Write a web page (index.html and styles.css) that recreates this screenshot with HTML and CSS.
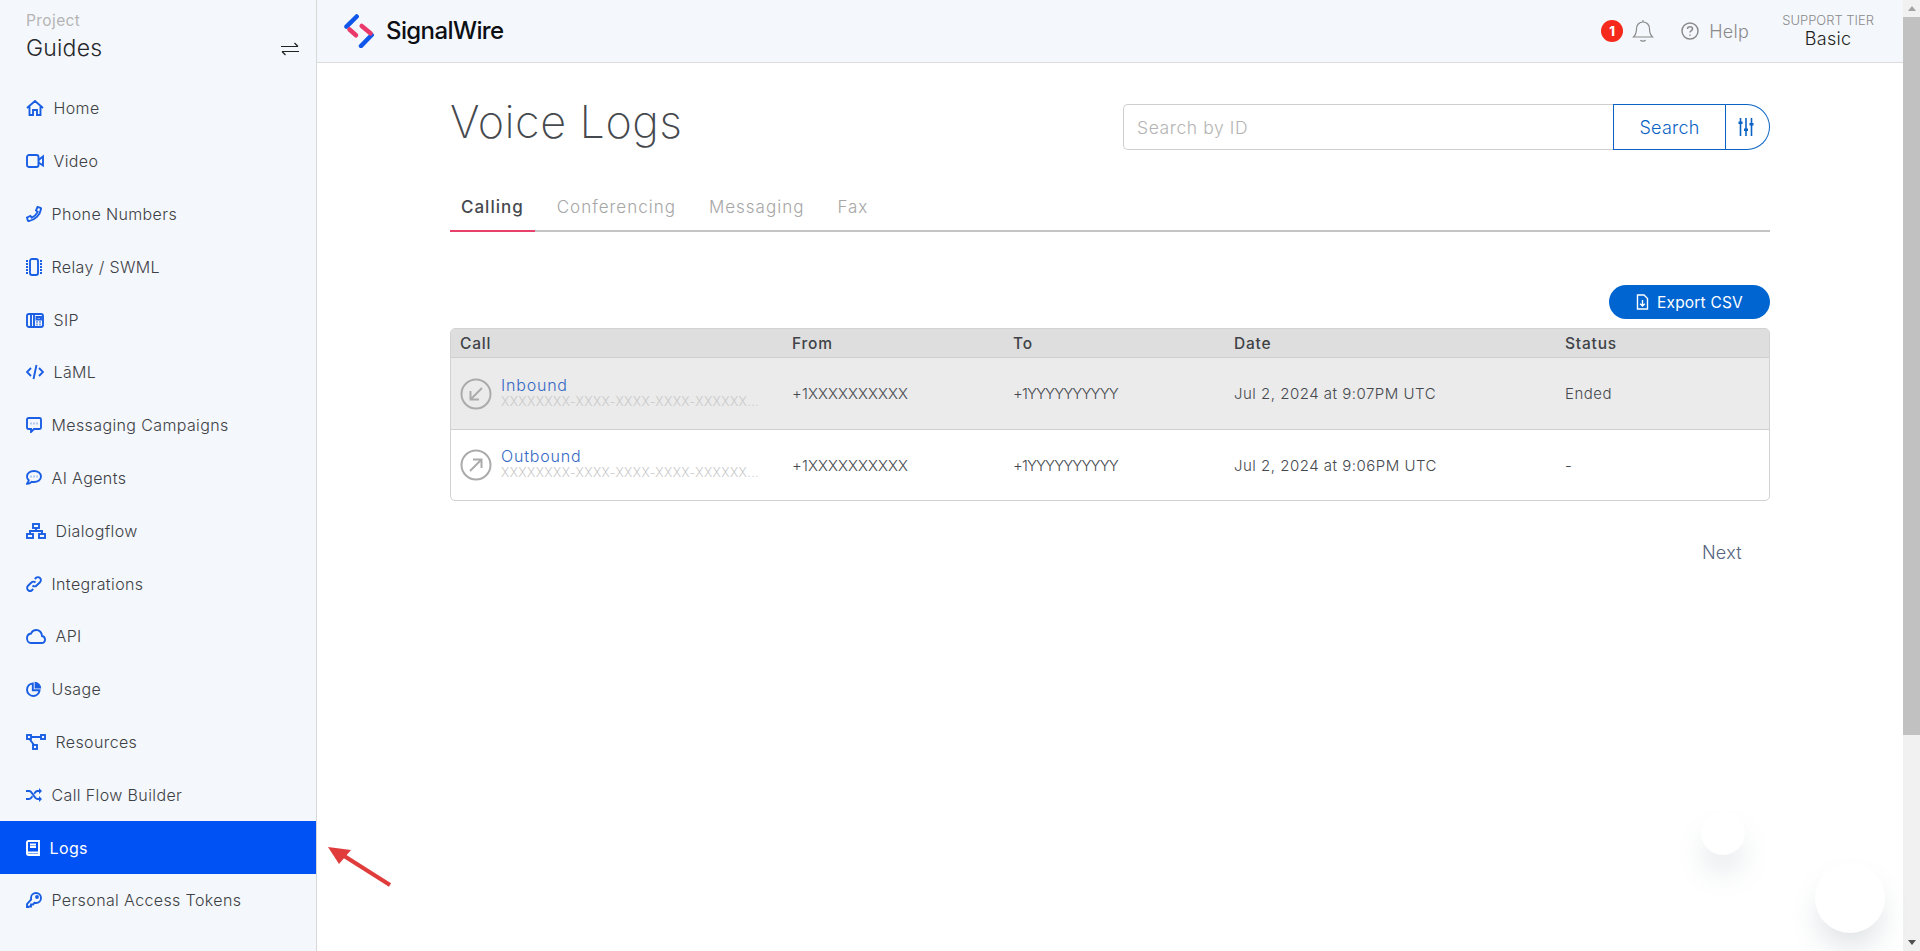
FILE: index.html
```html
<!DOCTYPE html>
<html lang="en">
<head>
    <meta charset="UTF-8">
    <meta name="viewport" content="width=device-width, initial-scale=1.0">
    <title>Voice Logs</title>
    <link rel="stylesheet" href="styles.css">
</head>
<body>
<div class="app">
    <aside class="sidebar">
        <div class="project">
            <div class="project-label">Project</div>
            <div class="project-row">
                <span class="project-name">Guides</span>
                <svg class="swap" width="18" height="14" viewBox="0 0 18 14"><path d="M0 4.5H17M13.5 1L17 4.5M18 9.5H1M4.5 13L1 9.5"/></svg>
            </div>
        </div>
        <nav class="nav">
            <a class="nav-item"><svg width="18" height="16" viewBox="0 0 18 16"><path d="M1 8L9 1L17 8M3.5 6V15H7V10H11V15H14.5V6"/></svg>Home</a>
            <a class="nav-item"><svg width="18" height="14" viewBox="0 0 18 14"><rect x="1" y="1" width="11.5" height="12" rx="2"/><path d="M12.5 6L17 2.5V11.5L12.5 8.5"/></svg>Video</a>
            <a class="nav-item"><svg width="16" height="16" viewBox="0 0 16 16"><path d="M11.5 1L14.6 1.8C15 1.9 15.1 2.2 15.1 2.6C14.2 9 9 14.2 2.6 15.1C2.2 15.1 1.9 15 1.8 14.6L1 11.5L4.4 10L5.8 11.7C8 10.6 10.6 8 11.7 5.8L10 4.4Z"/></svg>Phone Numbers</a>
            <a class="nav-item"><svg width="16" height="18" viewBox="0 0 16 18"><rect x="4" y="1" width="8" height="16" rx="2"/><path d="M0 3H2M0 6H2M0 9H2M0 12H2M0 15H2M14 3H16M14 6H16M14 9H16M14 12H16M14 15H16"/></svg>Relay / SWML</a>
            <a class="nav-item"><svg width="18" height="16" viewBox="0 0 18 16"><rect x="1" y="2" width="16" height="13" rx="2"/><path d="M5 1V15M8 1V15M10.5 5H15V7.5H10.5ZM10.5 10H11.5M13.5 10H14.5M10.5 12.5H11.5M13.5 12.5H14.5"/></svg>SIP</a>
            <a class="nav-item"><svg width="18" height="16" viewBox="0 0 18 16"><path d="M5 4L1 8L5 12M13 4L17 8L13 12M10.5 1L7.5 15"/></svg>LāML</a>
            <a class="nav-item"><svg width="16" height="16" viewBox="0 0 16 16"><path d="M2.5 1H13.5C14.3 1 15 1.7 15 2.5V10.5C15 11.3 14.3 12 13.5 12H8L5 15V12H2.5C1.7 12 1 11.3 1 10.5V2.5C1 1.7 1.7 1 2.5 1Z"/><path class="dots" d="M4.7 6.5H5.3M7.7 6.5H8.3M10.7 6.5H11.3"/></svg>Messaging Campaigns</a>
            <a class="nav-item"><svg width="16" height="15" viewBox="0 0 16 15"><path d="M8 1C4.1 1 1 3.3 1 6.5C1 8 1.7 9.3 2.8 10.3C2.5 11.6 1.8 12.8 1 13.7C2.8 13.7 4.5 13 5.6 11.8C6.3 12 7.2 12 8 12C11.9 12 15 9.7 15 6.5C15 3.3 11.9 1 8 1Z"/><path class="dots" d="M4.7 6.5H5.3M7.7 6.5H8.3M10.7 6.5H11.3"/></svg>AI Agents</a>
            <a class="nav-item"><svg width="20" height="16" viewBox="0 0 20 16"><rect x="7" y="1" width="6" height="4"/><rect x="1" y="11" width="6" height="4"/><rect x="13" y="11" width="6" height="4"/><path d="M10 5V8M4 11V8H16V11"/></svg>Dialogflow</a>
            <a class="nav-item"><svg width="16" height="16" viewBox="0 0 16 16"><path d="M6.5 9.5C7.7 10.7 9.5 10.7 10.6 9.5L14 6.2C15.2 5 15.2 3.1 14 2C12.8 0.8 11 0.8 9.8 2L8.8 3"/><path d="M9.5 6.5C8.3 5.3 6.5 5.3 5.4 6.5L2 9.8C0.8 11 0.8 12.9 2 14C3.2 15.2 5 15.2 6.2 14L7.2 13"/></svg>Integrations</a>
            <a class="nav-item"><svg width="20" height="15" viewBox="0 0 20 15"><path d="M5 14H15.5C17.5 14 19 12.5 19 10.5C19 8.7 17.7 7.3 16 7C16 3.7 13.5 1 10.3 1C8 1 6 2.4 5.1 4.5C2.7 4.8 1 6.8 1 9.2C1 11.9 2.6 14 5 14Z"/></svg>API</a>
            <a class="nav-item"><svg width="16" height="16" viewBox="0 0 16 16"><path d="M6.8 2.4A6.3 6.3 0 1 0 13.6 9.2H6.8Z"/><path class="fill" d="M8.6 0.8A6.6 6.6 0 0 1 15.2 7.4H8.6Z"/></svg>Usage</a>
            <a class="nav-item"><svg width="20" height="16" viewBox="0 0 20 16"><rect x="1" y="1" width="4" height="4"/><rect x="15" y="1" width="4" height="4"/><rect x="7" y="11" width="4" height="4"/><path d="M5 3H15M3.5 5L8 11"/></svg>Resources</a>
            <a class="nav-item"><svg width="16" height="14" viewBox="0 0 16 14"><path d="M0 3H3C4 3 4.6 3.4 5.2 4.1L9.4 9.9C10 10.6 10.6 11 11.6 11H14M0 11H3C4 11 4.6 10.6 5.2 9.9L6.4 8.3M8.2 5.7L9.4 4.1C10 3.4 10.6 3 11.6 3H14"/><path class="fill" d="M13 0L16 3L13 6ZM13 8L16 11L13 14Z"/></svg>Call Flow Builder</a>
            <a class="nav-item active"><svg width="14" height="16" viewBox="0 0 14 16"><path d="M2.5 1H13V15H2.5C1.7 15 1 14.3 1 13.5V2.5C1 1.7 1.7 1 2.5 1ZM1 12.5H13M4 4.5H10M4 7H10"/></svg>Logs</a>
            <a class="nav-item"><svg width="16" height="16" viewBox="0 0 16 16"><path d="M10 1C12.8 1 15 3.2 15 6C15 8.8 12.8 11 10 11C9.5 11 9 10.9 8.5 10.8L7 12.5H5V14.5H3L2.5 15H1V12L5.2 7.5C5.1 7 5 6.5 5 6C5 3.2 7.2 1 10 1Z"/><circle cx="11" cy="5" r="1"/></svg>Personal Access Tokens</a>
        </nav>
    </aside>

    <div class="page">
        <header class="topbar">
            <div class="brand">
                <svg width="31" height="34" viewBox="0 0 31 34"><path class="logo-blue" d="M12.7 2.5L2.5 12.7M27.7 21L17 32"/><path class="logo-pink" d="M5.5 15.5L12 21.3M17.7 12L26.5 19.3"/></svg>
                <span class="brand-name">SignalWire</span>
            </div>
            <div class="topbar-right">
                <span class="badge">1</span>
                <svg class="bell" width="22" height="24" viewBox="0 0 22 24"><path d="M11 1V3M11 3C7 3 4.5 6 4.5 10C4.5 14.5 3.5 16 1.5 18H20.5C18.5 16 17.5 14.5 17.5 10C17.5 6 15 3 11 3ZM8.5 21C9 22.5 13 22.5 13.5 21"/></svg>
                <a class="help"><svg width="18" height="18" viewBox="0 0 18 18"><circle cx="9" cy="9" r="8"/><path d="M6.5 7C6.5 5.5 7.7 4.8 9 4.8C10.5 4.8 11.5 5.7 11.5 6.9C11.5 8.5 9 8.7 9 10.5M9 12.5V13.8"/></svg>Help</a>
                <div class="tier">
                    <div class="tier-label">SUPPORT TIER</div>
                    <div class="tier-name">Basic</div>
                </div>
            </div>
        </header>

        <main class="content">
            <div class="title-row">
                <h1>Voice Logs</h1>
                <form class="search">
                    <input type="text" placeholder="Search by ID">
                    <button type="button" class="search-btn">Search</button>
                    <button type="button" class="filter-btn"><svg width="16" height="18" viewBox="0 0 16 18"><path d="M2.5 0V18M8 0V18M13.5 0V18"/><path class="fill" d="M0.5 3.5H4.5V6H0.5ZM6 10.5H10V13H6ZM11.5 5H15.5V7.5H11.5Z"/></svg></button>
                </form>
            </div>

            <div class="tabs">
                <a class="tab active">Calling</a>
                <a class="tab">Conferencing</a>
                <a class="tab">Messaging</a>
                <a class="tab">Fax</a>
            </div>

            <div class="actions">
                <button type="button" class="export-btn"><svg width="13" height="16" viewBox="0 0 13 16"><path d="M1.5 1H8L11.5 4.5V15H1.5ZM6.5 6V12M4.2 9.7L6.5 12L8.8 9.7"/></svg>Export CSV</button>
            </div>

            <div class="table">
                <div class="row head">
                    <div>Call</div><div>From</div><div>To</div><div>Date</div><div>Status</div>
                </div>
                <div class="row body hovered">
                    <div class="call">
                        <svg width="32" height="32" viewBox="0 0 32 32"><circle cx="16" cy="16" r="14.5"/><path d="M22 10L10.5 21.5M10.5 13V21.5H19"/></svg>
                        <div class="call-text">
                            <a class="call-type">Inbound</a>
                            <div class="call-id">XXXXXXXX-XXXX-XXXX-XXXX-XXXXXX...</div>
                        </div>
                    </div>
                    <div class="phone">+1XXXXXXXXXX</div><div class="phone-to">+1YYYYYYYYYY</div><div>Jul 2, 2024 at 9:07PM UTC</div><div>Ended</div>
                </div>
                <div class="row body">
                    <div class="call">
                        <svg width="32" height="32" viewBox="0 0 32 32"><circle cx="16" cy="16" r="14.5"/><path d="M10 22L21.5 10.5M13 10.5H21.5V19"/></svg>
                        <div class="call-text">
                            <a class="call-type">Outbound</a>
                            <div class="call-id">XXXXXXXX-XXXX-XXXX-XXXX-XXXXXX...</div>
                        </div>
                    </div>
                    <div class="phone">+1XXXXXXXXXX</div><div class="phone-to">+1YYYYYYYYYY</div><div>Jul 2, 2024 at 9:06PM UTC</div><div>-</div>
                </div>
            </div>

            <div class="pager"><a class="next">Next</a></div>
        </main>
    </div>

    <div class="scrollbar">
        <span class="arrow up"></span>
        <div class="track"><div class="thumb"></div></div>
        <span class="arrow down"></span>
    </div>
</div>

<!-- annotation arrow and the two floating widgets -->
<svg class="annotation" width="66" height="42" viewBox="0 0 66 42"><path class="arrow-shaft" d="M63 39L14 8"/><path class="arrow-head" d="M1 1L24 4L12 18Z"/></svg>
<div class="float float-small"></div>
<div class="float float-large"></div>
</body>
</html>
```

FILE: styles.css
```css
* {
    box-sizing: border-box;
}
html, body {
    height: 100%;
    margin: 0;
    overflow: hidden;
}
body {
    font-family: Inter, "Open Sans", sans-serif;
    color: #45494e;
    background-color: white;
}
a {
    cursor: pointer;
}
button, input {
    font-family: inherit;
}
.app {
    display: flex;
    height: 951px;
}

/* sidebar */
.sidebar {
    width: 317px;
    flex-shrink: 0;
    background-color: #f4f7fb;
    border-right: 1px solid #d8d8d8;
}
.project {
    height: 82px;
    padding: 12px 17px 0 26px;
}
.project-label {
    font-size: 15.5px;
    letter-spacing: 0.4px;
    line-height: 18px;
    color: #b5b5b5;
}
.project-row {
    display: flex;
    justify-content: space-between;
    align-items: center;
    margin-top: 3px;
}
.project-name {
    font-size: 23px;
    font-weight: 300;
    letter-spacing: 0.2px;
    line-height: 30px;
    color: #26282b;
}
.swap {
    fill: none;
    stroke: #222;
    stroke-width: 1.2;
    margin-top: 2px;
}
.nav-item {
    display: flex;
    align-items: center;
    gap: 9.5px;
    height: 52.8px;
    padding-left: 26px;
    font-size: 16px;
    font-weight: 300;
    letter-spacing: 0.38px;
    color: #3d4145;
}
.nav-item svg {
    flex-shrink: 0;
    fill: none;
    stroke: #1a5fe3;
    stroke-width: 1.9;
}
.nav-item svg .fill {
    fill: #1a5fe3;
    stroke: none;
}
.nav-item svg .dots {
    stroke-width: 2.2;
}
.nav-item.active {
    background-color: #0052f5;
    color: white;
    font-weight: 400;
}
.nav-item.active svg {
    stroke: white;
}

/* top bar */
.page {
    flex: 1;
    display: flex;
    flex-direction: column;
    min-width: 0;
}
.topbar {
    display: flex;
    justify-content: space-between;
    align-items: center;
    height: 63px;
    flex-shrink: 0;
    padding: 0 30px 0 27px;
    background-color: #f4f7fb;
    border-bottom: 1px solid #dcdcdc;
}
.brand {
    display: flex;
    align-items: center;
    gap: 11px;
}
.brand svg {
    fill: none;
    stroke-linecap: round;
    stroke-width: 4.5;
}
.logo-blue {
    stroke: #0f56ea;
}
.logo-pink {
    stroke: #ea3a6b;
}
.brand-name {
    margin-top: -2px;
    font-size: 24px;
    font-weight: 500;
    letter-spacing: -0.6px;
    color: #0c0f14;
}
.topbar-right {
    display: flex;
    align-items: center;
}
.badge {
    display: flex;
    justify-content: center;
    align-items: center;
    width: 22px;
    height: 22px;
    border-radius: 50%;
    background-color: #f5291c;
    color: white;
    font-size: 13px;
    font-weight: 800;
}
.bell {
    margin-left: 9px;
    fill: none;
    stroke: #8a8a8a;
    stroke-width: 1.2;
}
.help {
    display: flex;
    align-items: center;
    gap: 10px;
    margin-left: 27px;
    font-size: 18px;
    font-weight: 300;
    letter-spacing: 0.3px;
    color: #8b8b8b;
}
.help svg {
    fill: none;
    stroke: #8b8b8b;
    stroke-width: 1.5;
}
.tier {
    margin-left: 33px;
    margin-right: -1px;
    text-align: center;
}
.tier-label {
    font-size: 13px;
    font-weight: 300;
    line-height: 15px;
    color: #8b8b8b;
}
.tier-name {
    font-size: 18px;
    font-weight: 300;
    letter-spacing: 0.3px;
    line-height: 22px;
    color: #1d1f22;
}

/* main content */
.content {
    width: 1320px;
    margin: 0 auto;
}
.title-row {
    display: flex;
    justify-content: space-between;
    align-items: flex-start;
    padding-top: 32px;
}
h1 {
    margin: 0;
    font-size: 45px;
    font-weight: 200;
    letter-spacing: 0.45px;
    line-height: 54px;
    color: #45494e;
}
.search {
    display: flex;
    width: 647px;
    height: 46px;
    margin-top: 9px;
}
.search input {
    flex: 1;
    min-width: 0;
    padding: 0 13px;
    border: 1px solid #cfcfcf;
    border-right: none;
    border-radius: 5px 0 0 5px;
    font-size: 17.5px;
    font-weight: 300;
    letter-spacing: 0.6px;
    outline: none;
}
.search input::placeholder {
    color: #b4b4b4;
}
.search-btn, .filter-btn {
    border: 1px solid #0a63c4;
    background-color: white;
    color: #0a63c4;
}
.search-btn {
    width: 113px;
    font-size: 18px;
    font-weight: 300;
    letter-spacing: 0.2px;
}
.filter-btn {
    display: flex;
    justify-content: center;
    align-items: center;
    width: 44px;
    padding: 0 3px 0 0;
    border-left: none;
    border-radius: 0 23px 23px 0;
}
.filter-btn svg {
    fill: none;
    stroke: #0a63c4;
    stroke-width: 1.6;
}
.filter-btn svg .fill {
    fill: #0a63c4;
    stroke: none;
}
.tabs {
    display: flex;
    margin-top: 36px;
    height: 46px;
    border-bottom: 2px solid #c4c4c4;
}
.tab {
    height: 46px;
    padding: 0 11px;
    margin-right: 11px;
    font-size: 17px;
    font-weight: 300;
    letter-spacing: 1px;
    line-height: 42px;
    color: #a6a6a6;
}
.tab.active {
    border-bottom: 2px solid #e8406b;
    font-weight: 500;
    color: #45494e;
}
.actions {
    display: flex;
    justify-content: flex-end;
    margin-top: 53px;
}
.export-btn {
    display: flex;
    justify-content: center;
    align-items: center;
    gap: 8px;
    width: 161px;
    height: 34px;
    border: none;
    border-radius: 17px;
    background-color: #0065d1;
    color: white;
    font-size: 15.5px;
    font-weight: 400;
    letter-spacing: 0.2px;
}
.export-btn svg {
    fill: none;
    stroke: white;
    stroke-width: 1.4;
}

/* table */
.table {
    margin-top: 9px;
    border: 1px solid #d2d2d2;
    border-radius: 5px;
    overflow: hidden;
}
.row {
    display: grid;
    grid-template-columns: 332px 221px 221px 331px 1fr;
    align-items: center;
    padding-left: 9px;
    font-size: 15px;
    font-weight: 300;
    letter-spacing: 0.5px;
}
.row.head {
    height: 29px;
    background-color: #dedede;
    border-bottom: 1px solid #cfcfcf;
    font-size: 15.5px;
    font-weight: 500;
    letter-spacing: 0.8px;
    color: #3f4246;
}
.row.body {
    height: 71px;
}
.row.body + .row.body {
    border-top: 1px solid #cfcfcf;
}
.row.hovered {
    background-color: #ebebeb;
}
.phone {
    letter-spacing: 0.1px;
}
.phone-to {
    letter-spacing: -0.9px;
}
.call {
    display: flex;
    align-items: center;
    gap: 9px;
}
.call svg {
    flex-shrink: 0;
    fill: none;
    stroke: #ababab;
    stroke-width: 2;
}
.call-text {
    margin-top: -2px;
}
.call-type {
    display: block;
    font-size: 16px;
    letter-spacing: 0.8px;
    line-height: 18px;
    color: #3468c4;
}
.call-id {
    white-space: nowrap;
    font-size: 12.5px;
    letter-spacing: 0.4px;
    line-height: 16px;
    color: #c9c9c9;
}
.pager {
    display: flex;
    justify-content: flex-end;
    padding: 41px 28px 0 0;
}
.next {
    font-size: 18px;
    font-weight: 300;
    letter-spacing: 0.3px;
    color: #56647e;
}

/* fake browser scrollbar */
.scrollbar {
    display: flex;
    flex-direction: column;
    align-items: center;
    width: 17px;
    flex-shrink: 0;
    background-color: #f1f1f1;
}
.arrow {
    width: 0;
    height: 0;
    border-left: 4px solid transparent;
    border-right: 4px solid transparent;
    margin: 6px 0;
}
.arrow.up {
    border-bottom: 5px solid #a3a3a3;
}
.arrow.down {
    border-top: 5px solid #505050;
}
.track {
    flex: 1;
    width: 100%;
}
.thumb {
    height: 718px;
    background-color: #c1c1c1;
}

/* overlays */
.annotation {
    position: absolute;
    left: 327px;
    top: 846px;
}
.arrow-shaft {
    fill: none;
    stroke: #e03c3c;
    stroke-width: 4;
}
.arrow-head {
    fill: #e03c3c;
}
.float {
    position: absolute;
    border-radius: 50%;
    background-color: white;
}
.float-small {
    left: 1701px;
    top: 811px;
    width: 44px;
    height: 44px;
    box-shadow: 0 20px 30px -4px rgba(90, 110, 120, 0.18);
}
.float-large {
    left: 1815px;
    top: 863px;
    width: 70px;
    height: 70px;
    box-shadow: 0 18px 30px -4px rgba(90, 110, 120, 0.2);
}
```
